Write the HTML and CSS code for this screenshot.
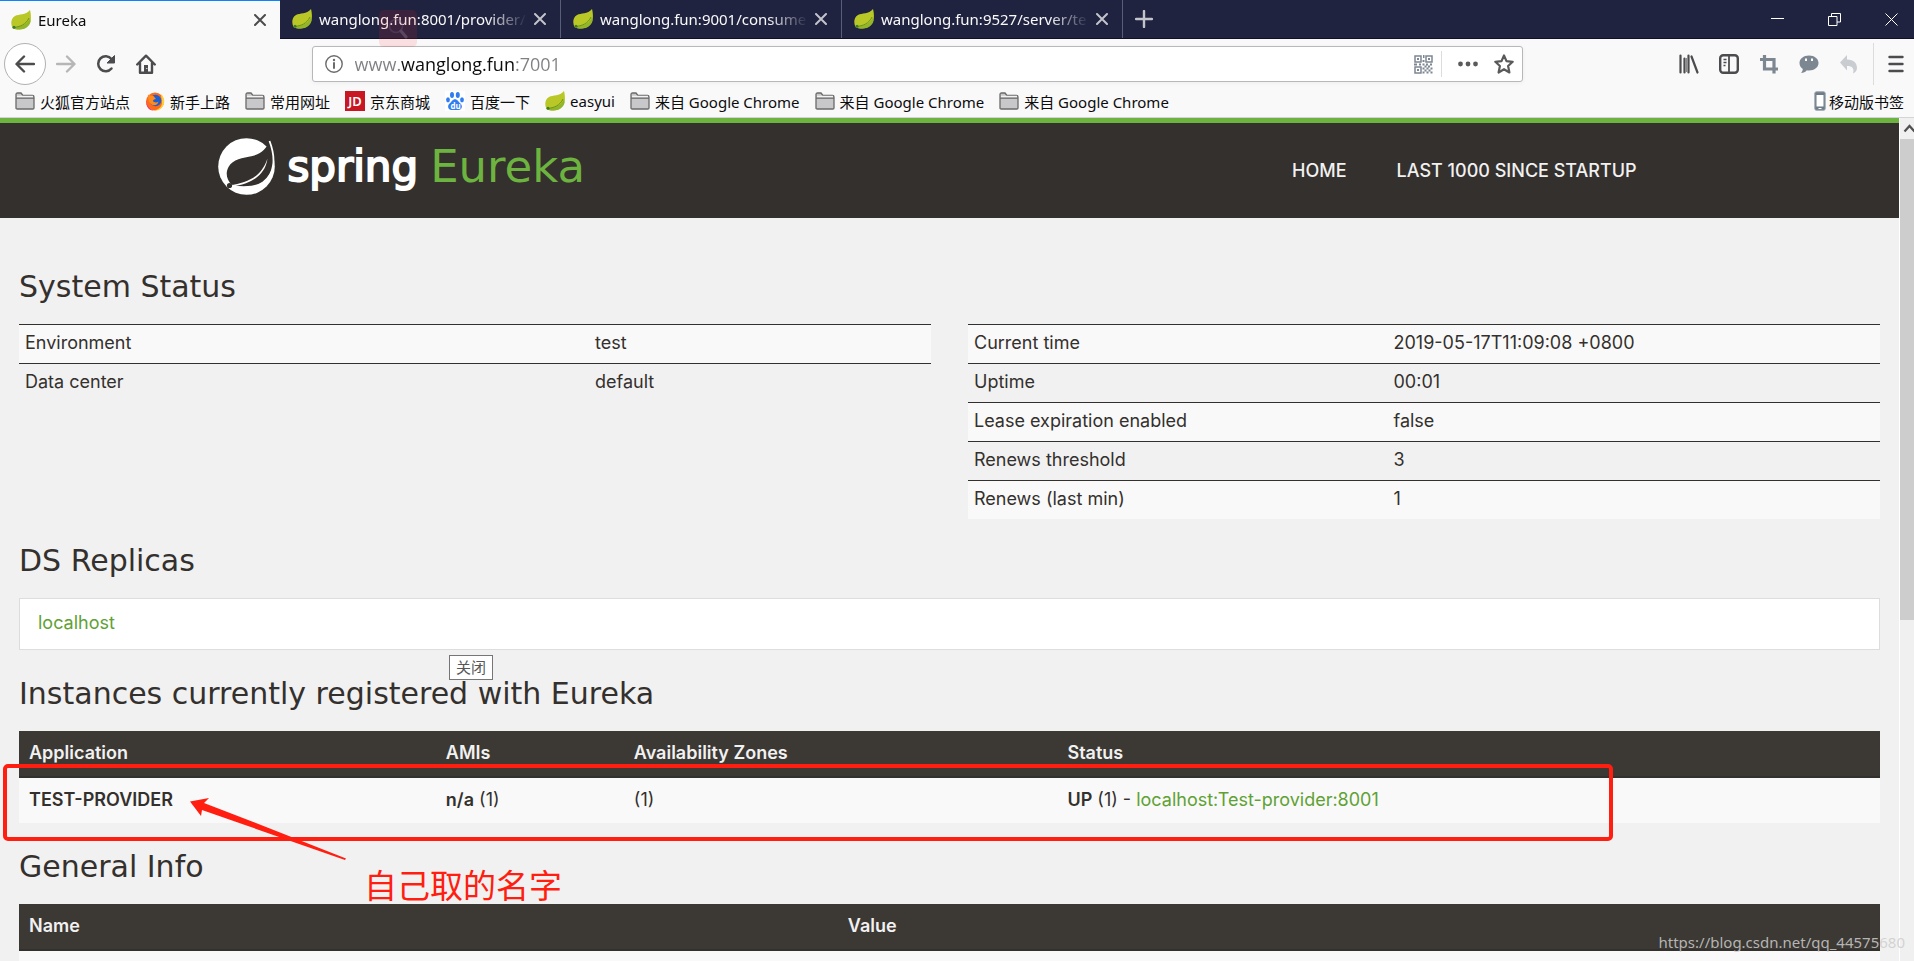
FILE: index.html
```
<!DOCTYPE html>
<html lang="zh-CN">
<head>
  <meta charset="UTF-8">
  <meta name="viewport" content="width=device-width, initial-scale=1.0">
  <title>Eureka</title>
  <link rel="stylesheet" href="styles.css">
</head>
<body>

<!-- Shared icons -->
<svg class="sprite" aria-hidden="true">
  <symbol id="leaf" viewBox="0 0 20 20">
    <path d="M19 0c.8 3 1.300 7 .6 10.500C18.600 16 14 19.500 8.500 19.500c-3 0-5-.5-7-1.500C-.5 14-.3 8.500 4 6 8 3.800 14.500 5.500 19 0z" fill="#b9c826"/>
    <path d="M19 8C17 14.500 10 16.500 1.500 18c2 1.200 4.500 1.500 7 1.500 6 0 10-3.500 11.100-8z" fill="#93b52a"/>
    <path d="M2 17.500C9 17 15 14.500 18 8" fill="none" stroke="#6a9420" stroke-width="1"/>
    <circle cx="3" cy="17.300" r="1.500" fill="#3d7a2c"/>
  </symbol>
  <symbol id="folder" viewBox="0 0 20 18">
    <path d="M1 16V2.500C1 1.500 1.500 1 2.500 1H6l2 2.500h9.500c1 0 1.500.5 1.500 1.500v11c0 .8-.5 1-1.200 1H2.200C1.500 17 1 16.700 1 16z" fill="#c8c8cb" stroke="#6a6a6a" stroke-width="1.300"/>
    <path d="M2 4.500h16" stroke="#f2f2f2" stroke-width="1.500"/>
    <path d="M1 6.200h18" stroke="#6a6a6a" stroke-width="1.200"/>
  </symbol>
  <symbol id="cross" viewBox="0 0 12 12">
    <path d="M1 1l10 10M11 1L1 11" fill="none" stroke="currentColor" stroke-width="2" stroke-linecap="round"/>
  </symbol>
</svg>

<div class="browser">

  <!-- Tab Strip -->
  <div class="tabs">
    <div class="tab active">
      <svg class="favicon"><use href="#leaf"/></svg>
      <span class="tab-title">Eureka</span>
      <button class="tab-close" aria-label="关闭"><svg><use href="#cross"/></svg></button>
    </div>
    <div class="tab">
      <svg class="favicon"><use href="#leaf"/></svg>
      <span class="tab-title">wanglong.fun:8001/provider/</span>
      <button class="tab-close" aria-label="关闭"><svg><use href="#cross"/></svg></button>
    </div>
    <div class="tab">
      <svg class="favicon"><use href="#leaf"/></svg>
      <span class="tab-title">wanglong.fun:9001/consume</span>
      <button class="tab-close" aria-label="关闭"><svg><use href="#cross"/></svg></button>
    </div>
    <div class="tab">
      <svg class="favicon"><use href="#leaf"/></svg>
      <span class="tab-title">wanglong.fun:9527/server/te</span>
      <button class="tab-close" aria-label="关闭"><svg><use href="#cross"/></svg></button>
    </div>
    <button class="new-tab" aria-label="New tab">
      <svg width="18" height="18" viewBox="0 0 18 18"><path d="M9 1v16M1 9h16" stroke="#c3c3cc" stroke-width="2.400" stroke-linecap="round"/></svg>
    </button>
    <div class="window-buttons">
      <button aria-label="Minimize"><svg width="13" height="13" viewBox="0 0 13 13"><path d="M0 5.500h13" stroke="#fff"/></svg></button>
      <button aria-label="Restore"><svg width="13" height="13" viewBox="0 0 13 13" fill="none" stroke="#fff"><path d="M.5 3.500h8.500v9H.5zM3.500 3.500V.5h9v8.500H9"/></svg></button>
      <button aria-label="Close"><svg width="13" height="13" viewBox="0 0 13 13"><path d="M.5.5l12 12M12.500.5l-12 12" stroke="#fff"/></svg></button>
    </div>
  </div>

  <!-- Navigation Toolbar -->
  <div class="toolbar">
    <button class="back" aria-label="Back">
      <svg width="20" height="20" viewBox="0 0 20 20"><path d="M19 10H2M9 2.500L1.500 10 9 17.500" fill="none" stroke="#4c4c4f" stroke-width="2.400" stroke-linecap="round" stroke-linejoin="round"/></svg>
    </button>
    <button aria-label="Forward">
      <svg width="20" height="20" viewBox="0 0 20 20"><path d="M1 10h17M11 2.500l7.500 7.500-7.500 7.500" fill="none" stroke="#b6b6b8" stroke-width="2.400" stroke-linecap="round" stroke-linejoin="round"/></svg>
    </button>
    <button aria-label="Reload">
      <svg width="20" height="20" viewBox="0 0 20 20"><path d="M15.500 14.500A7.500 7.500 0 1 1 15.500 5" fill="none" stroke="#4c4c4f" stroke-width="2.500" stroke-linecap="round"/><path d="M18.500 1.500v7.500h-7.500z" fill="#4c4c4f" stroke="#4c4c4f" stroke-linejoin="round"/></svg>
    </button>
    <button aria-label="Home">
      <svg width="20" height="20" viewBox="0 0 20 20"><path d="M1.200 10.500L10 1.700l8.800 8.800M4 9v9.700h12V9" fill="none" stroke="#4c4c4f" stroke-width="2.400" stroke-linecap="round" stroke-linejoin="round"/><path d="M8 11h4v8H8z" fill="#4c4c4f"/><path d="M10.300 14.500h1" stroke="#fff"/></svg>
    </button>
    <div class="spring"></div>
    <div class="urlbar">
      <svg width="18" height="18" viewBox="0 0 18 18"><circle cx="9" cy="9" r="8.200" fill="none" stroke="#6b6b6e" stroke-width="1.400"/><path d="M9 8v5" stroke="#6b6b6e" stroke-width="2" stroke-linecap="round"/><circle cx="9" cy="5" r="1.200" fill="#6b6b6e"/></svg>
      <input class="url" type="text" value="www.wanglong.fun:7001" aria-label="Address">
      <svg width="19" height="19" viewBox="0 0 19 19"><g fill="none" stroke="#7d8792" stroke-width="1.500"><path d="M1 1h6v6H1zM12 1h6v6h-6zM1 12h6v6H1z"/></g><g fill="#7d8792"><path d="M3 3h2v2H3zM14 3h2v2h-2zM3 14h2v2H3zM9 0h1.500v3H9zM8.500 5h2v2h-2zM0 8.500h3v2H0zM5 8.500h2v2H5zM8.500 8.500h2v2h-2zM12 8.500h2v2h-2zM16 8.500h2v2h-2zM10.500 10.500h2v2h-2zM14 10.500h2v2h-2zM8.500 12.500h2v2h-2zM12.500 12.500h2v2h-2zM16.500 12.500h2v2h-2zM10.500 14.500h2v2h-2zM14.500 14.500h2v2h-2zM8.500 16.500h2v2h-2zM12.500 16.500h2v2h-2zM16.500 16.500h2v2h-2z"/></g></svg>
      <span class="divider"></span>
      <button class="more" aria-label="Page actions"><svg width="20" height="6" viewBox="0 0 20 6" fill="#5a5a5d"><circle cx="2.500" cy="3" r="2.400"/><circle cx="10" cy="3" r="2.400"/><circle cx="17.500" cy="3" r="2.400"/></svg></button>
      <button aria-label="Bookmark"><svg width="20" height="20" viewBox="0 0 20 20"><path d="M10 1.500l2.500 5.600 6.200.7-4.600 4.200 1.300 6.500L10 15.200l-5.400 3.300L5.900 12 1.300 7.800l6.200-.7z" fill="none" stroke="#5a5a5d" stroke-width="2.200" stroke-linejoin="round"/></svg></button>
    </div>
    <div class="spring"></div>
    <button aria-label="Library"><svg width="20" height="20" viewBox="0 0 20 20"><path d="M1.500 1.500v17M5.500 4.500v14M9.500 1.500v17M12.500 2.500l6 16" stroke="#4c4c4f" stroke-width="2.200" stroke-linecap="round"/><path d="M7.500 4v14" stroke="#8a8a8c" stroke-width="1"/></svg></button>
    <button aria-label="Sidebars"><svg width="20" height="20" viewBox="0 0 20 20"><rect x="1.200" y="1.200" width="17.600" height="17.600" rx="3" fill="none" stroke="#4c4c4f" stroke-width="2.400"/><path d="M10 2v16" stroke="#4c4c4f" stroke-width="1.800"/><path d="M4.500 5.500h3M4.500 8.500h3M4.500 11.500h2" stroke="#4c4c4f" stroke-width="1.400"/></svg></button>
    <button aria-label="Crop"><svg width="20" height="20" viewBox="0 0 20 20"><path d="M1 5.500h14v14M5.500 1v14H19" fill="none" stroke="#7d8792" stroke-width="3.200"/></svg></button>
    <button aria-label="Chat"><svg width="20" height="20" viewBox="0 0 20 20"><path d="M10 1.500c5.500 0 9.500 3.200 9.500 7.500s-4 7.500-9.500 7.500c-1 0-1.500 0-2.200-.2C6.500 18 4.500 19 2 19c1-1 1.700-2.500 1.800-4C1.700 13.500.5 11.500.5 9 .5 4.700 4.500 1.500 10 1.500z" fill="#7d8792"/><path d="M7 4.500v2.500M13 4.500v2.500" stroke="#fff" stroke-width="2"/></svg></button>
    <button aria-label="Undo"><svg width="20" height="20" viewBox="0 0 20 20"><path d="M8 1v4.500c7 0 10 4 10 8.500 0 2.500-1.500 4.500-4 5.500 1.500-5-.5-7.500-6-7.500v4.500L1 8.500z" fill="#c9cdd2"/></svg></button>
    <span class="divider tall"></span>
    <button aria-label="Menu"><svg width="16" height="20" viewBox="0 0 16 20"><path d="M1.500 3h13M1.500 10h13M1.500 17h13" stroke="#4c4c4f" stroke-width="2.400" stroke-linecap="round"/></svg></button>
  </div>

  <!-- Bookmarks -->
  <div class="bookmarks">
    <a href="#"><svg><use href="#folder"/></svg>火狐官方站点</a>
    <a href="#">
      <svg viewBox="0 0 20 20"><circle cx="10" cy="10.500" r="9" fill="#ff6a1a"/><path d="M16 3c3 3 4.500 8 2 12-2 3.500-5.500 5-9 4.500 5-1 8-4 8-8 0-3-1-5.500-1-8.500z" fill="#ffcf33"/><path d="M1.500 8C1 13 3 18 9 19.500 4 20 0 15 1.500 8z" fill="#e5226b"/><circle cx="10.500" cy="9.500" r="5.800" fill="#1d5fd0"/><path d="M3.500 3.500C5 5 7 4.500 8.500 5L11 8c-2 .3-3 1-3 2 1.500 2 4 1.500 5.500.5-.5 3-3 4.500-6 3.500C4 12.500 2.500 8 3.500 3.500z" fill="#ff8a1f"/></svg>新手上路
    </a>
    <a href="#"><svg><use href="#folder"/></svg>常用网址</a>
    <a href="#"><span class="jd">JD</span>京东商城</a>
    <a href="#">
      <svg viewBox="0 0 20 20" fill="#2f7df0"><rect width="20" height="20" fill="#fff"/><ellipse cx="7" cy="4" rx="2" ry="2.900"/><ellipse cx="12.800" cy="4" rx="2" ry="2.900"/><ellipse cx="3" cy="8.800" rx="1.900" ry="2.600"/><ellipse cx="17" cy="8.800" rx="1.900" ry="2.600"/><path d="M10 8.200c2.500 0 3.500 2.600 5.500 4.300 2.500 2.200 1.500 6.500-2 6.500h-7c-3.500 0-4.500-4.300-2-6.500 2-1.700 3-4.300 5.500-4.300z"/><text x="5.500" y="17.500" class="du">du</text></svg>百度一下
    </a>
    <a href="#"><svg><use href="#leaf"/></svg>easyui</a>
    <a href="#"><svg><use href="#folder"/></svg>来自 Google Chrome</a>
    <a href="#"><svg><use href="#folder"/></svg>来自 Google Chrome</a>
    <a href="#"><svg><use href="#folder"/></svg>来自 Google Chrome</a>
    <a href="#" class="mobile">
      <svg viewBox="0 0 12 20"><rect x=".8" y=".8" width="10.400" height="18.400" rx="1.500" fill="#6f7b87" stroke="#9aa4ad"/><path d="M2.500 4h7v11.500h-7z" fill="#fff"/><path d="M4.500 17.500h3" stroke="#fff"/></svg>移动版书签
    </a>
  </div>

  <!-- Page -->
  <div class="viewport">
    <div class="page">
      <header class="navbar">
        <div class="container">
          <a class="brand" href="#">
            <svg width="57" height="57" viewBox="0 0 57 57">
              <circle cx="28.500" cy="28.500" r="28.300" fill="#fff"/>
              <path d="M51.500 3.500c-3 6.500-8 12.500-17 14.500-10 2.200-19.500 3-24 11-3.500 6.500-1.500 13 3 17.500C24 51 38 49 45 44c11-8 13-24 6.500-40.500z" fill="#34302d"/>
              <path d="M51.500 3c6.500 17 5.500 33-6.500 41.500-6 4.200-14 5.500-32 4" fill="none" stroke="#fff" stroke-width="1.800"/>
              <path d="M12 47.500C29 44 43 40 49.500 20.500 47 38 33 46 14 48.500z" fill="#fff"/>
              <circle cx="11.500" cy="47.500" r="2.600" fill="#34302d"/>
            </svg>
            <span class="brand-spring">spring</span>
            <span class="brand-eureka">Eureka</span>
          </a>
          <nav class="links">
            <a href="#">HOME</a>
            <a href="#">LAST 1000 SINCE STARTUP</a>
          </nav>
        </div>
      </header>

      <main class="content">
        <h1>System Status</h1>
        <div class="status">
          <table class="status-table environment">
            <tr><td>Environment</td><td>test</td></tr>
            <tr><td>Data center</td><td>default</td></tr>
          </table>
          <table class="status-table runtime">
            <tr><td>Current time</td><td>2019-05-17T11:09:08 +0800</td></tr>
            <tr><td>Uptime</td><td>00:01</td></tr>
            <tr><td>Lease expiration enabled</td><td>false</td></tr>
            <tr><td>Renews threshold</td><td>3</td></tr>
            <tr><td>Renews (last min)</td><td>1</td></tr>
          </table>
        </div>

        <h1>DS Replicas</h1>
        <ul class="replicas">
          <li><a href="#">localhost</a></li>
        </ul>

        <h1>Instances currently registered with Eureka</h1>
        <table class="list-table instances">
          <thead>
            <tr><th>Application</th><th>AMIs</th><th>Availability Zones</th><th>Status</th></tr>
          </thead>
          <tbody>
            <tr>
              <td><b>TEST-PROVIDER</b></td>
              <td><b>n/a</b> (1)</td>
              <td>(1)</td>
              <td><b>UP</b> (1) - <a href="#">localhost:Test-provider:8001</a></td>
            </tr>
          </tbody>
        </table>

        <h1>General Info</h1>
        <table class="list-table general">
          <thead>
            <tr><th>Name</th><th>Value</th></tr>
          </thead>
          <tbody>
            <tr><td>&nbsp;</td><td>&nbsp;</td></tr>
          </tbody>
        </table>
      </main>
    </div>

    <div class="scrollbar">
      <svg width="14" height="21" viewBox="0 0 14 21"><path d="M4.500 13.500l5-5.500 5 5.500" fill="none" stroke="#505050" stroke-width="2.200"/></svg>
      <div class="thumb"></div>
    </div>
  </div>

  <!-- Things drawn over the window -->
  <div class="search-ghost">
    <svg width="20" height="22" viewBox="0 0 20 22"><circle cx="8" cy="8" r="6.500" fill="none" stroke="#6a5878" stroke-width="1.500"/><path d="M13 13l5 6" stroke="#8a7c94" stroke-width="3" stroke-linecap="round"/></svg>
  </div>
  <div class="tooltip">关闭</div>
  <div class="mark-box"></div>
  <svg class="mark-arrow" width="156" height="63" viewBox="0 0 156 63"><path d="M0 3.500L19 0l-5 5 48 18.500L156 60.500l-1 1.500-100-35L12 12l-1 6z" fill="#ff1e10"/></svg>
  <div class="mark-text">自己取的名字</div>
  <div class="watermark">https://blog.csdn.net/qq_44575680</div>
</div>

</body>
</html>
```
FILE: styles.css
```
/* Global Styling */
* {
  box-sizing: border-box;
  margin: 0;
  padding: 0;
}
body {
  font-family: "Noto Sans", "Noto Sans CJK SC", sans-serif;
  font-size: 15px;
  color: #0c0c0d;
  overflow: hidden;
}
button {
  display: flex;
  align-items: center;
  justify-content: center;
  background: none;
  border: none;
  cursor: pointer;
}
svg {
  display: block;
  flex-shrink: 0;
}
a {
  text-decoration: none;
}
.sprite {
  display: none;
}
.browser {
  position: relative;
  display: flex;
  flex-direction: column;
  height: 100vh;
  background-color: #f9f9fa;
  overflow: hidden;
}

/* Tab Strip */
.tabs {
  display: flex;
  height: 39px;
  background-color: #202340;
  border-bottom: 1px solid #0f1028;
}
.tab {
  display: flex;
  align-items: center;
  gap: 7px;
  width: 281px;
  padding: 0 14px 0 12px;
  color: #f9f9fa;
  border-right: 1px solid #5b5d78;
}
.tab.active {
  width: 280px;
  height: 39px;
  padding-left: 11px;
  color: #0c0c0d;
  background-color: #f9f9fa;
  border-top: 1px solid #0a84ff;
  border-right: none;
}
.favicon {
  width: 20px;
  height: 20px;
}
.tab-title {
  flex: 1;
  overflow: hidden;
  white-space: nowrap;
  mask-image: linear-gradient(to left, transparent, #000 40px);
}
.tab-close {
  color: #c3c3cc;
}
.tab-close svg {
  width: 12px;
  height: 12px;
}
.tab.active .tab-close {
  color: #4c4c4f;
}
.new-tab {
  width: 42px;
}
.window-buttons {
  display: flex;
  gap: 44px;
  margin-left: auto;
  padding-right: 16px;
}

/* Toolbar */
.toolbar {
  display: flex;
  align-items: center;
  gap: 20px;
  height: 50px;
  padding: 0 10px 0 4px;
}
.back {
  width: 42px;
  height: 42px;
  margin-right: -10px;
  background-color: #fff;
  border: 1px solid #b1b1b3;
  border-radius: 50%;
}
.spring {
  flex: 10;
}
.urlbar {
  flex: 103;
  display: flex;
  align-items: center;
  gap: 12px;
  height: 36px;
  padding: 0 8px 0 12px;
  background-color: #fff;
  border: 1px solid #b8b8ba;
  border-radius: 3px;
  box-shadow: 0 1px 4px rgba(0, 0, 0, 0.05);
}
.url {
  flex: 1;
  height: 34px;
  font-family: "Open Sans", sans-serif;
  font-size: 18px;
  border: none;
  outline: none;
  color: transparent;
  background-image: linear-gradient(to right, #808084 46px, #0c0c0d 46px, #0c0c0d 159px, #808084 159px);
  -webkit-background-clip: text;
  background-clip: text;
}
.divider {
  width: 1px;
  height: 26px;
  margin-left: -4px;
  background-color: #dcdcde;
}
.divider.tall {
  height: 42px;
  margin: 0 -6px;
}
.more {
  margin: 0 4px;
}

/* Bookmarks */
.bookmarks {
  display: flex;
  align-items: center;
  gap: 15px;
  height: 29px;
  padding: 0 10px 4px 15px;
  border-bottom: 1px solid #d4d4d6;
}
.bookmarks a {
  display: flex;
  align-items: center;
  gap: 5px;
  color: #0c0c0d;
  white-space: nowrap;
}
.bookmarks svg {
  width: 20px;
  height: 20px;
}
.bookmarks .mobile {
  gap: 3px;
  margin-left: auto;
}
.bookmarks .mobile svg {
  width: 12px;
}
.jd {
  width: 20px;
  height: 20px;
  font-size: 13px;
  font-weight: 600;
  line-height: 20px;
  text-align: center;
  color: #fff;
  background-color: #c81623;
}
.du {
  font: bold 8px "Open Sans", sans-serif;
  fill: #fff;
}

/* Viewport */
.viewport {
  flex: 1;
  display: flex;
  min-height: 0;
}
.page {
  flex: 1;
  overflow: hidden;
  font-family: Inter, sans-serif;
  font-size: 18px;
  line-height: 22px;
  color: #34302d;
  background-color: #f1f1f1;
}
.scrollbar {
  width: 15px;
  background-color: #f0f0f0;
  border-left: 1px solid #fff;
}
.thumb {
  height: 57%;
  background-color: #cdcdcd;
}

/* Page Header */
.navbar {
  background-color: #34302d;
  border-top: 5px solid #6db33f;
}
.container {
  display: flex;
  justify-content: space-between;
  width: 77%;
  margin: 0 auto;
}
.brand {
  display: flex;
  align-items: center;
  padding: 15px 0 23px;
  font-family: "DejaVu Sans", sans-serif;
  line-height: 57px;
}
.brand-spring {
  margin: 0 12px;
  font-size: 42px;
  color: #fff;
  -webkit-text-stroke: 2px #fff;
}
.brand-eureka {
  font-size: 45px;
  color: #6db33f;
}
.links {
  display: flex;
  align-items: center;
  padding: 0 19px;
  font-weight: 500;
}
.links a {
  padding: 0 25px;
  color: #f1f1f1;
}

/* Content */
.content {
  padding: 25px 19px 0;
}
h1 {
  margin: 26px 0 19px;
  font-family: "DejaVu Sans", sans-serif;
  font-size: 30px;
  font-weight: normal;
  line-height: 36px;
}
.content a {
  color: #5fa134;
}
table {
  width: 100%;
  border-collapse: separate;
  border-spacing: 0;
  table-layout: fixed;
}

/* Status */
.status {
  display: grid;
  grid-template-columns: 1fr 1fr;
  align-items: start;
  gap: 37px;
}
.status + h1 {
  margin-top: 24px;
}
.status-table td {
  padding: 7px 6px 9px;
  border-top: 1px solid #34302d;
}
.status-table tr:nth-child(odd) {
  background-color: #f9f9f9;
}
.environment td:first-child {
  width: 62.5%;
}
.runtime td:first-child {
  width: 46%;
}

/* Replicas */
.replicas {
  list-style: none;
  padding: 13px 18px 15px;
  background-color: #fff;
  border: 1px solid #ddd;
}

/* Lists */
.list-table th {
  padding: 11px 10px 12px;
  font-weight: 600;
  text-align: left;
  color: #f1f1f1;
  background-color: #3c3833;
  border-bottom: 2px solid #34302d;
}
.list-table td {
  padding: 11px 10px 12px;
  background-color: #f9f9f9;
}
.list-table b {
  font-weight: 600;
}
.instances th:nth-child(1) {
  width: 22.4%;
}
.instances th:nth-child(2) {
  width: 10.1%;
}
.instances th:nth-child(3) {
  width: 23.3%;
}
.general th:first-child {
  width: 44%;
}

/* Overlays */
.search-ghost {
  position: absolute;
  left: 379px;
  top: 10px;
  display: flex;
  align-items: center;
  justify-content: center;
  width: 38px;
  height: 37px;
  background-color: rgba(255, 40, 40, 0.12);
  border-radius: 5px;
}
.search-ghost svg {
  opacity: 0.4;
}
.tooltip {
  position: absolute;
  left: 449px;
  top: 655px;
  padding: 0 6px;
  font-size: 15px;
  line-height: 23px;
  color: #575757;
  background-color: #fff;
  border: 1px solid #767676;
}
.mark-box {
  position: absolute;
  left: 3px;
  top: 764px;
  width: 1610px;
  height: 77px;
  border: 4px solid #ff1e10;
  border-radius: 5px;
}
.mark-arrow {
  position: absolute;
  left: 190px;
  top: 798px;
}
.mark-text {
  position: absolute;
  left: 364px;
  top: 862px;
  font-size: 33px;
  line-height: 48px;
  color: #ff1e10;
}
.watermark {
  position: absolute;
  right: 9px;
  bottom: 8px;
  font-size: 15px;
  line-height: 22px;
  color: rgba(205, 205, 205, 0.85);
}
```
